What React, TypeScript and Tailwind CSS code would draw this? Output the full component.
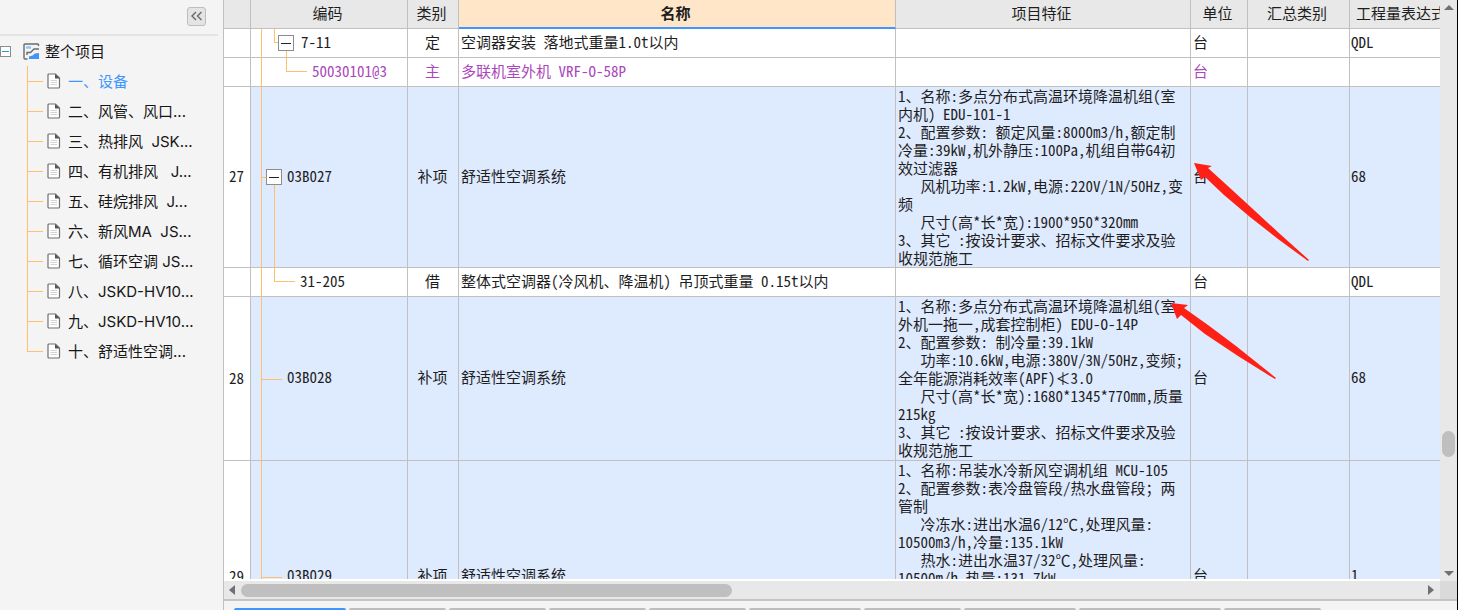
import React from "react";

type Guide = "nested" | "leaf" | "open" | "last" | "plain";

interface Row {
  no: string;
  code: string;
  kind: string;
  name: string;
  features: string[];
  unit: string;
  expr: string;
  guide: Guide;
  height: string;
  tone: string;
}

const WHITE = "bg-white text-[#1e1e1e]";
const PURPLE = "bg-white text-[#ab47bc]";
const BLUE = "bg-[#deeafe] text-[#1e1e1e]";

const rows: Row[] = [
  {
    no: "", code: "7-11", kind: "定", name: "空调器安装 落地式重量1.0t以内", features: [],
    unit: "台", expr: "QDL", guide: "nested", height: "h-[29px]", tone: WHITE,
  },
  {
    no: "", code: "50030101@3", kind: "主", name: "多联机室外机 VRF-O-58P", features: [],
    unit: "台", expr: "", guide: "leaf", height: "h-[29px]", tone: PURPLE,
  },
  {
    no: "27", code: "03B027", kind: "补项", name: "舒适性空调系统",
    features: [
      "1、名称:多点分布式高温环境降温机组(室",
      "内机) EDU-101-1",
      "2、配置参数: 额定风量:8000m3/h,额定制",
      "冷量:39kW,机外静压:100Pa,机组自带G4初",
      "效过滤器",
      "   风机功率:1.2kW,电源:220V/1N/50Hz,变",
      "频",
      "   尺寸(高*长*宽):1900*950*320mm",
      "3、其它 :按设计要求、招标文件要求及验",
      "收规范施工",
    ],
    unit: "台", expr: "68", guide: "open", height: "h-[181px]", tone: BLUE,
  },
  {
    no: "", code: "31-205", kind: "借", name: "整体式空调器(冷风机、降温机) 吊顶式重量 0.15t以内", features: [],
    unit: "台", expr: "QDL", guide: "last", height: "h-[29px]", tone: WHITE,
  },
  {
    no: "28", code: "03B028", kind: "补项", name: "舒适性空调系统",
    features: [
      "1、名称:多点分布式高温环境降温机组(室",
      "外机一拖一,成套控制柜) EDU-O-14P",
      "2、配置参数: 制冷量:39.1kW",
      "   功率:10.6kW,电源:380V/3N/50Hz,变频;",
      "全年能源消耗效率(APF)≮3.0",
      "   尺寸(高*长*宽):1680*1345*770mm,质量",
      "215kg",
      "3、其它 :按设计要求、招标文件要求及验",
      "收规范施工",
    ],
    unit: "台", expr: "68", guide: "plain", height: "h-[164px]", tone: BLUE,
  },
  {
    no: "29", code: "03B029", kind: "补项", name: "舒适性空调系统",
    features: [
      "1、名称:吊装水冷新风空调机组 MCU-105",
      "2、配置参数:表冷盘管段/热水盘管段；两",
      "管制",
      "   冷冻水:进出水温6/12℃,处理风量:",
      "10500m3/h,冷量:135.1kW",
      "   热水:进出水温37/32℃,处理风量:",
      "10500m/h,热量:131.7kW",
    ],
    unit: "台", expr: "1", guide: "plain", height: "h-[232px]", tone: BLUE,
  },
];

const codePadding: Record<Guide, string> = {
  nested: "pl-[50px]",
  leaf: "pl-[61px]",
  open: "pl-[36px]",
  last: "pl-[49px]",
  plain: "pl-[36px]",
};

const sections = [
  "一、设备",
  "二、风管、风口...",
  "三、热排风  JSK...",
  "四、有机排风   J...",
  "五、硅烷排风  J...",
  "六、新风MA  JS...",
  "七、循环空调 JS...",
  "八、JSKD-HV10...",
  "九、JSKD-HV10...",
  "十、舒适性空调...",
];

const tabs = [
  "w-28 bg-[#4096ff]",
  "w-[97px] bg-[#bdbdbd]",
  "w-[97px] bg-[#bdbdbd]",
  "w-[97px] bg-[#bdbdbd]",
  "w-[97px] bg-[#bdbdbd]",
  "w-28 bg-[#bdbdbd]",
  "w-[97px] bg-[#bdbdbd]",
  "w-28 bg-[#bdbdbd]",
  "w-[142px] bg-[#bdbdbd]",
  "w-[97px] bg-[#bdbdbd]",
];

function Toggle({ place }: { place: string }) {
  return (
    <button
      aria-label="折叠"
      className={`absolute top-1/2 flex size-4 -translate-y-1/2 items-center justify-center border border-[#8c8c8c] bg-white ${place}`}
    >
      <span className="h-px w-2.5 bg-[#222]" />
    </button>
  );
}

function Guides({ guide }: { guide: Guide }) {
  const line = "absolute border-[#ffbf6b]";
  return (
    <>
      <span className={`${line} -bottom-px left-[10px] top-0 border-l`} />
      {guide === "nested" && (
        <>
          <span className={`${line} bottom-1/2 left-[23px] top-0 w-1.5 border-b border-l`} />
          <span className={`${line} -bottom-px left-[35px] top-1/2 border-l`} />
          <Toggle place="left-[27px]" />
        </>
      )}
      {guide === "leaf" && <span className={`${line} bottom-1/2 left-[35px] top-0 w-[21px] border-b border-l`} />}
      {guide === "open" && (
        <>
          <span className={`${line} left-[10px] top-1/2 w-2 border-t`} />
          <span className={`${line} -bottom-px left-[23px] top-1/2 border-l`} />
          <Toggle place="left-[15px]" />
        </>
      )}
      {guide === "last" && <span className={`${line} bottom-1/2 left-[23px] top-0 w-[21px] border-b border-l`} />}
      {guide === "plain" && <span className={`${line} left-[10px] top-1/2 w-[21px] border-t`} />}
    </>
  );
}

function FileIcon() {
  return (
    <svg width="14" height="16" viewBox="0 0 14 16" className="shrink-0" aria-hidden="true">
      <path d="M2 1H8.5L12.5 5V14Q12.5 15 11.5 15H2Q1 15 1 14V2Q1 1 2 1Z" fill="#fff" stroke="#707070" strokeWidth="1.2" />
      <path d="M8 1V5.5H12.8Z" fill="#555" />
      <path d="M3.5 7.5H10M3.5 9.5H10M3.5 11.5H10" stroke="#d4d4d4" strokeWidth="1" />
    </svg>
  );
}

function ProjectIcon() {
  return (
    <svg width="17" height="17" viewBox="0 0 17 17" className="shrink-0" aria-hidden="true">
      <path d="M15.5 3V1.5Q15.5 1 15 1H2Q1 1 1 2V15Q1 16 2 16H4.5" fill="none" stroke="#6b6b6b" strokeWidth="1.4" />
      <path d="M3 4.5H8" stroke="#8cc4ff" strokeWidth="2.4" />
      <path d="M4 12V9.5H7.5L11 6H16" fill="none" stroke="#6b6b6b" strokeWidth="1.4" />
      <path d="M6 16V13.5L9.5 12.5L12 10.5L16 10V16Z" fill="#3f94fb" />
    </svg>
  );
}

function Sidebar() {
  return (
    <aside className="w-[224px] shrink-0 border-r border-[#c0c0c0] bg-[#f4f4f4] font-['Inter','Noto_Sans_CJK_SC',sans-serif] text-[15px] text-[#161616]">
      <div className="mr-[5px] flex h-9 items-center justify-end border-b-2 border-[#e4e4e4] pb-0.5 pr-3">
        <button
          aria-label="收起"
          className="flex h-[19px] w-[19px] items-center justify-center rounded-[3px] border border-[#bdbdbd] bg-[#e4e4e4]"
        >
          <svg width="13" height="10" viewBox="0 0 13 10" fill="none" stroke="#6e6e6e" strokeWidth="1.5" aria-hidden="true">
            <path d="M6 1L2 5L6 9M11.5 1L7.5 5L11.5 9" />
          </svg>
        </button>
      </div>
      <div className="flex h-[30px] items-center">
        <button aria-label="折叠" className="flex h-[11px] w-[11px] items-center justify-center border border-[#8c8c8c] bg-white">
          <span className="h-px w-[7px] bg-[#1ba1e2]" />
        </button>
        <span className="ml-3 flex items-center gap-[5px]">
          <ProjectIcon />
          <span className="pt-0.5">整个项目</span>
        </span>
      </div>
      <ul>
        {sections.map((label, i) => (
          <li key={label} className="relative h-[30px] pl-[47px]">
            <span
              className={`absolute left-[27px] top-0 border-l border-[#ffbf6b] ${i === sections.length - 1 ? "h-[15px]" : "h-[30px]"}`}
            />
            <span className="absolute left-[27px] top-[15px] w-4 border-t border-[#ffbf6b]" />
            <a
              href="#"
              className={`flex h-[30px] items-center gap-[7px] whitespace-pre ${i === 0 ? "text-[#4096ff]" : ""}`}
            >
              <FileIcon />
              <span className="pt-0.5">{label}</span>
            </a>
          </li>
        ))}
      </ul>
    </aside>
  );
}

function Arrow({ points }: { points: string }) {
  return <polygon points={points} fill="#ff2015" />;
}

const th = "overflow-hidden whitespace-nowrap border-b border-r border-[#c0c0c0] bg-[#e8e8e8] p-0 pb-[3px] pr-[3px] font-normal";
const td = "border-b border-r border-[#c0c0c0] p-0 pb-[3px]";

function BillTable() {
  return (
    <div className="relative min-h-0 flex-1 overflow-hidden bg-[#deeafe]">
      <table className="w-full table-fixed border-separate border-spacing-0 font-['Noto_Sans_Mono_CJK_SC','Noto_Sans_CJK_SC',monospace] text-[15px] leading-[18px] text-[#1e1e1e]">
        <colgroup>
          <col className="w-[27px]" />
          <col className="w-[157px]" />
          <col className="w-[51px]" />
          <col />
          <col className="w-[295px]" />
          <col className="w-[57px]" />
          <col className="w-[102px]" />
          <col className="w-[90px]" />
        </colgroup>
        <thead>
          <tr className="h-[29px]">
            <th className={th} aria-label="序号" />
            <th className={th}>编码</th>
            <th className={th}>类别</th>
            <th className="border-b-2 border-r border-b-[#4096ff] border-r-[#c0c0c0] bg-[#ffe6c8] p-0 pb-0.5 pr-[3px] font-bold">
              名称
            </th>
            <th className={th}>项目特征</th>
            <th className={th}>单位</th>
            <th className={th}>汇总类别</th>
            <th className="overflow-hidden whitespace-nowrap border-b border-[#c0c0c0] bg-[#e8e8e8] p-0 pb-[3px] pl-1.5 text-left font-normal">
              工程量表达式
            </th>
          </tr>
        </thead>
        <tbody>
          {rows.map((row) => (
            <tr key={row.code} className={`${row.height} ${row.tone}`}>
              <td className="border-b border-r border-[#c0c0c0] bg-white p-0 pb-0.5 pr-px text-center">{row.no}</td>
              <td className={`${td} relative ${codePadding[row.guide]}`}>
                <Guides guide={row.guide} />
                {row.code}
              </td>
              <td className={`${td} pr-px text-center`}>{row.kind}</td>
              <td className={`${td} whitespace-nowrap pl-0.5`}>{row.name}</td>
              <td className="whitespace-pre border-b border-r border-[#c0c0c0] p-0 pl-0.5 align-top">
                {row.features.join("\n")}
              </td>
              <td className={`${td} pl-0.5`}>{row.unit}</td>
              <td className={td} />
              <td className="border-b border-[#c0c0c0] p-0 pb-[3px] pl-px">{row.expr}</td>
            </tr>
          ))}
        </tbody>
      </table>
      <svg className="pointer-events-none absolute right-[130px] top-[160px]" width="140" height="222" viewBox="1170 160 140 222" aria-hidden="true">
        <Arrow points="1194,163 1212,166 1208,168 1230,188 1255,211 1280,234 1309,260 1308,261 1278,239 1250,217 1224,195 1205,177 1201,180" />
        <Arrow points="1171,303 1188,305 1184,308 1208,325 1236,346 1276,378 1275,379 1238,356 1205,334 1181,315 1177,319" />
      </svg>
    </div>
  );
}

export default function App() {
  return (
    <div className="flex h-screen overflow-hidden bg-[#f4f4f4]">
      <Sidebar />
      <main className="flex min-w-0 flex-1 flex-col border-r border-black">
        <div className="flex min-h-0 flex-1">
          <div className="flex min-w-0 flex-1 flex-col">
            <BillTable />
            <div className="h-0.5 bg-white" />
          </div>
          <div className="flex w-[17px] shrink-0 flex-col items-center bg-[#e8e8e8]">
            <svg width="10" height="5" viewBox="0 0 10 5" className="mt-[5px]" fill="#6f6f76" aria-hidden="true">
              <path d="M0 5L5 0L10 5Z" />
            </svg>
            <div className="flex-[423]" />
            <div className="h-[26px] w-[13px] rounded-full bg-[#bfbfbf]" />
            <div className="flex-[115]" />
            <svg width="10" height="5" viewBox="0 0 10 5" className="mb-[5px]" fill="#6f6f76" aria-hidden="true">
              <path d="M0 0L5 5L10 0Z" />
            </svg>
          </div>
        </div>
        <div className="flex h-[18px] shrink-0 bg-[#e8e8e8]">
          <div className="flex min-w-0 flex-1 items-center pl-[5px] pr-1.5">
            <svg width="6" height="10" viewBox="0 0 6 10" fill="#6f6f76" aria-hidden="true">
              <path d="M6 0V10L0 5Z" />
            </svg>
            <div className="ml-1.5 h-[13px] w-[491px] rounded-full bg-[#bfbfbf]" />
            <svg width="6" height="10" viewBox="0 0 6 10" className="ml-auto" fill="#6f6f76" aria-hidden="true">
              <path d="M0 0V10L6 5Z" />
            </svg>
          </div>
          <div className="w-[17px] bg-[#dadada]" />
        </div>
        <div className="h-0.5 shrink-0 bg-[#c4c4c4]" />
        <div className="flex h-[9px] shrink-0 gap-[3px] overflow-hidden pl-2.5 pt-[7px]">
          {tabs.map((tab, i) => (
            <button key={i} aria-label={`页签${i + 1}`} className={`h-2 shrink-0 rounded-t-[2px] ${tab}`} />
          ))}
        </div>
      </main>
    </div>
  );
}
